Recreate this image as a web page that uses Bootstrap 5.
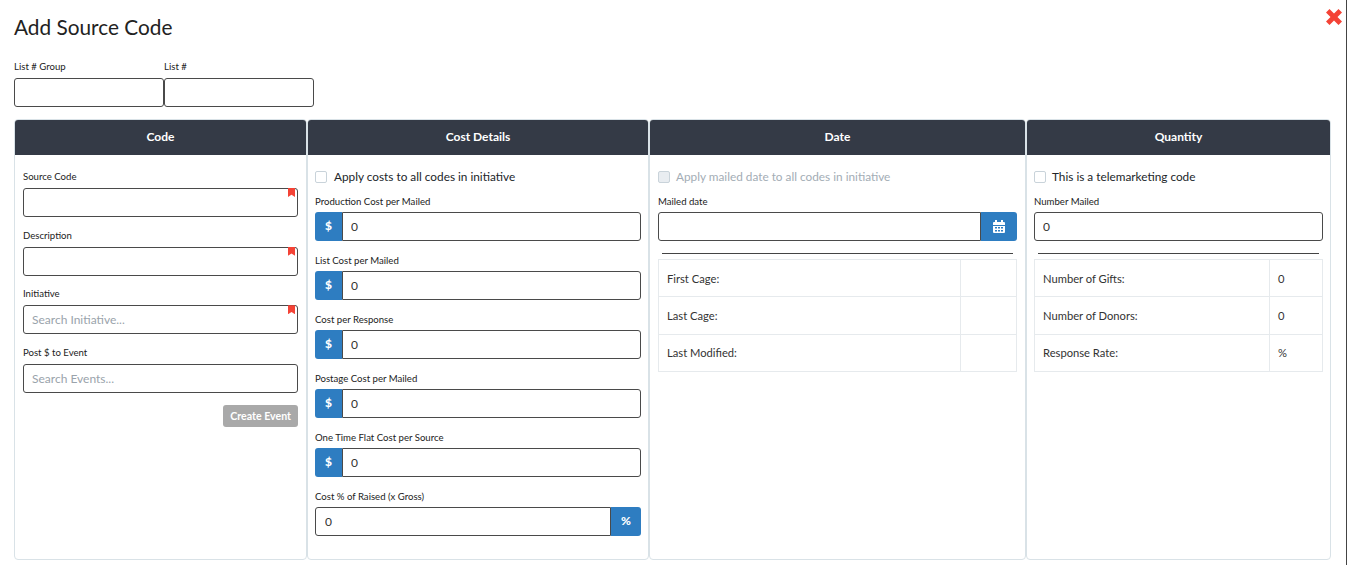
<!DOCTYPE html>
<html lang="en">
<head>
<meta charset="utf-8">
<title>Add Source Code</title>
<link href="https://cdn.jsdelivr.net/npm/bootstrap@5.3.0/dist/css/bootstrap.min.css" rel="stylesheet">
<style>
html,body{height:565px;overflow:hidden;background:#fff}
body{font-family:Lato,"Liberation Sans",sans-serif;color:#212529;font-size:13px}
.sheet{position:relative;height:565px;width:1347px;border-right:1px solid #444;padding:0 15px 0 14px}
.ttl{font-size:20.8px;font-weight:400;line-height:28px;margin:0;padding-top:13px;height:61px;color:#222}
.closer{position:absolute;left:1325px;top:8px;width:18px;height:18px}
.lbl{display:block;font-size:9.6px;line-height:12px;margin:0 0 5px;color:#222}
.fld{display:block;width:100%;height:29px;border:1px solid #4a4a4a;border-radius:3px;padding:0 8px;font:12px Lato,sans-serif;color:#333;background:#fff;outline:0}
.fld::placeholder{color:#9aa3ab;opacity:1}
.topf{width:150px}
.toprow{height:41px}
.panels{margin-top:17px;height:441px;align-items:stretch}
.pane{border:1px solid #d9e2e7;border-radius:4px;overflow:hidden;background:#fff;flex:none;height:441px}
.p1{width:293px}.p2{width:342px}.p3{width:377px}.p4{width:305px}
.head{height:35px;background:#343a46;color:#fff;font-weight:700;font-size:12px;line-height:34px;text-align:center}
.bdy{padding:15px 8px 0}
.p2 .bdy,.p4 .bdy{padding-left:7px;padding-right:7px}
.grp{margin-bottom:12.67px;position:relative}
.p2 .lbl,.p3 .lbl,.p4 .lbl{margin-bottom:4.400px}
.p2 .grp{margin-bottom:13.600px}
.p1 .bdy{padding-top:16px}
.req{position:absolute;right:3px;bottom:20px;width:7px;height:9px;background:#f44336;clip-path:polygon(0 0,100% 0,100% 100%,50% 75%,0 100%)}
.chk{display:flex;align-items:center;gap:6px;font-size:11.8px;height:14px;margin-bottom:11.600px;line-height:14px}
.p2 .chk{gap:7px}
.box{width:12px;height:12px;border:1px solid #c9d3da;border-radius:2px;background:#fff;flex:none}
.off{color:#a3adb5}
.off .box{background:#e9edf1}
.addon{width:27px;height:29px;background:#2e7dc1;color:#fff;font-weight:900;font-size:12px;display:flex;align-items:center;justify-content:center;flex:none}
.addon.lft{border-radius:3px 0 0 3px}
.addon.rgt{border-radius:0 3px 3px 0}
.fld.jl{border-radius:0 3px 3px 0;flex:1;min-width:0;padding-left:8px}
.fld.jr{border-radius:3px 0 0 3px;flex:1;min-width:0;padding-left:9px}
.pct{width:30px}
.cal{width:36px}
.rule{border-top:1px solid #444;margin:12px 4px 5px;height:0}
.info{width:100%;border-collapse:collapse;font-size:11.2px;color:#333}
.info td{border:1px solid #e6eaed;height:37.3px;padding:2px 8px 0}
.p3 .cw2{width:56px}
.p4 .cw2{width:53px}
.mkbtn{height:22px;font-size:10.6px;font-weight:700;background:#a9a9a9;color:#fff;border:0;border-radius:3px;padding:0 7px;line-height:22px;margin-top:-1px}
</style>
</head>
<body>
<div class="sheet">
  <h1 class="ttl">Add Source Code</h1>
  <svg class="closer" viewBox="0 0 18 18"><path d="M1 4.500 4.500 1 9 5.500 13.500 1 17 4.500 12.500 9 17 13.500 13.500 17 9 12.500 4.500 17 1 13.500 5.500 9z" fill="#f44336"/></svg>
  <div class="d-flex toprow">
    <div class="topf"><label class="lbl">List # Group</label><input class="fld"></div>
    <div class="topf"><label class="lbl">List #</label><input class="fld"></div>
  </div>
  <div class="d-flex panels">
    <section class="pane p1">
      <div class="head">Code</div>
      <div class="bdy">
        <div class="grp"><label class="lbl">Source Code</label><input class="fld"><span class="req"></span></div>
        <div class="grp"><label class="lbl">Description</label><input class="fld"><span class="req"></span></div>
        <div class="grp"><label class="lbl">Initiative</label><input class="fld" placeholder="Search Initiative..."><span class="req"></span></div>
        <div class="grp"><label class="lbl">Post $ to Event</label><input class="fld" placeholder="Search Events..."></div>
        <div class="d-flex justify-content-end"><button class="mkbtn" type="button">Create Event</button></div>
      </div>
    </section>
    <section class="pane p2">
      <div class="head">Cost Details</div>
      <div class="bdy">
        <div class="chk"><span class="box"></span><span>Apply costs to all codes in initiative</span></div>
        <div class="grp"><label class="lbl">Production Cost per Mailed</label><div class="d-flex"><span class="addon lft">$</span><input class="fld jl" value="0"></div></div>
        <div class="grp"><label class="lbl">List Cost per Mailed</label><div class="d-flex"><span class="addon lft">$</span><input class="fld jl" value="0"></div></div>
        <div class="grp"><label class="lbl">Cost per Response</label><div class="d-flex"><span class="addon lft">$</span><input class="fld jl" value="0"></div></div>
        <div class="grp"><label class="lbl">Postage Cost per Mailed</label><div class="d-flex"><span class="addon lft">$</span><input class="fld jl" value="0"></div></div>
        <div class="grp"><label class="lbl">One Time Flat Cost per Source</label><div class="d-flex"><span class="addon lft">$</span><input class="fld jl" value="0"></div></div>
        <div class="grp"><label class="lbl">Cost % of Raised (x Gross)</label><div class="d-flex"><input class="fld jr" value="0"><span class="addon rgt pct">%</span></div></div>
      </div>
    </section>
    <section class="pane p3">
      <div class="head">Date</div>
      <div class="bdy">
        <div class="chk off"><span class="box"></span><span>Apply mailed date to all codes in initiative</span></div>
        <div><label class="lbl">Mailed date</label><div class="d-flex"><input class="fld jr"><span class="addon rgt cal"><svg width="12" height="13" viewBox="0 0 12 13"><path fill="#fff" d="M2 0h2v2H8V0h2v2h1a1 1 0 0 1 1 1v2H0V3a1 1 0 0 1 1-1h1z"/><path fill="#fff" fill-rule="evenodd" d="M0 6h12v6a1 1 0 0 1-1 1H1a1 1 0 0 1-1-1zM2 7v1.500h2V7zM5 7v1.500h2V7zM8 7v1.500h2V7zM2 10v1.500h2V10zM5 10v1.500h2V10zM8 10v1.500h2V10z"/></svg></span></div></div>
        <div class="rule"></div>
        <table class="info">
          <tr><td>First Cage:</td><td class="cw2"></td></tr>
          <tr><td>Last Cage:</td><td class="cw2"></td></tr>
          <tr><td>Last Modified:</td><td class="cw2"></td></tr>
        </table>
      </div>
    </section>
    <section class="pane p4">
      <div class="head">Quantity</div>
      <div class="bdy">
        <div class="chk"><span class="box"></span><span>This is a telemarketing code</span></div>
        <div><label class="lbl">Number Mailed</label><input class="fld" value="0"></div>
        <div class="rule"></div>
        <table class="info">
          <tr><td>Number of Gifts:</td><td class="cw2">0</td></tr>
          <tr><td>Number of Donors:</td><td class="cw2">0</td></tr>
          <tr><td>Response Rate:</td><td class="cw2">%</td></tr>
        </table>
      </div>
    </section>
  </div>
</div>
<script src="https://cdn.jsdelivr.net/npm/bootstrap@5.3.0/dist/js/bootstrap.bundle.min.js"></script>
</body>
</html>
